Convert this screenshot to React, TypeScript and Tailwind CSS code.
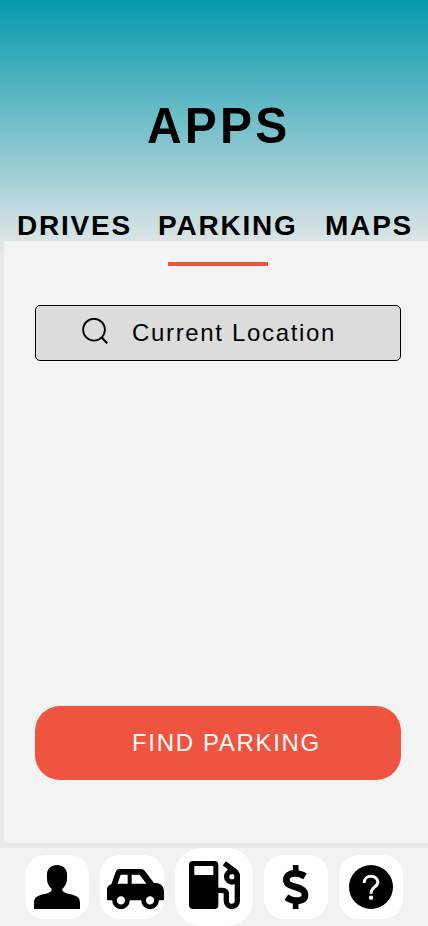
import type { ReactNode } from "react";

const tabs = [
  { label: "DRIVES", style: "w-[141px]" },
  { label: "PARKING", style: "w-[167px]" },
  { label: "MAPS", style: "" },
];

function Tile({ label, children }: { label: string; children: ReactNode }) {
  return (
    <button aria-label={label} className="size-16 shrink-0 overflow-hidden rounded-[20px] bg-white">
      <svg viewBox="0 0 192 192" className="block size-16">{children}</svg>
    </button>
  );
}

function BottomBar() {
  return (
    <nav className="flex h-[78px] items-center bg-[#f2f2f2] pl-[25px]">
      <Tile label="Profile">
        <path d="M96 30C114 30 126 42 126 58V70C126 86 119 96 112 101C110 111 122 114 138 118C158 124 165 128 165 145V162H27V145C27 128 34 124 54 118C70 114 82 111 80 101C73 96 66 86 66 70V58C66 42 78 30 96 30Z" />
      </Tile>
      <div className="ml-[11px] flex">
        <Tile label="Car">
          <path fillRule="evenodd" d="M58 42H124Q130 42 134 47L162 84H168C182 84 192 96 192 110V136H21V104Q21 92 34 88L46 53Q50 42 58 42ZM62 59L53 86H83V59ZM95 59V86H139L119 59Z" />
          <circle cx="63" cy="136" r="19.5" fill="white" stroke="black" strokeWidth="14" />
          <circle cx="150" cy="136" r="19.5" fill="white" stroke="black" strokeWidth="14" />
        </Tile>
      </div>
      <button aria-label="Fuel and parking" className="ml-[11px] size-[78px] shrink-0 rounded-[26px] bg-white">
        <svg viewBox="0 0 234 234" className="block size-[78px]">
          <path fillRule="evenodd" d="M54 39H118Q130 39 130 51V171Q130 183 118 183H54Q42 183 42 171V51Q42 39 54 39ZM58 54V81H115V54Z" />
          <g fill="none" stroke="black" strokeWidth="16">
            <path d="M129 127H142Q154 127 154 139V159A16.5 16.5 0 0 0 187 159V86Q187 76 179 69L148 46M168 62L162 76" />
            <circle cx="171" cy="86" r="16" />
          </g>
        </svg>
      </button>
      <div className="ml-[11px] flex gap-[11px]">
        <Tile label="Payments">
          <g fill="none" stroke="black" strokeWidth="20">
            <path d="M123 64C112 57 103 55 93 55C76 55 67 63 67 74C67 88 78 92 95 96C114 101 123 107 123 119C123 132 112 137 97 137C84 137 76 133 67 127" />
            <path d="M95 30V50M95 142V162" strokeWidth="17" />
          </g>
        </Tile>
        <Tile label="Help">
          <circle cx="96" cy="96" r="66" />
          <path d="M75.5 84C75.5 72 84 64 96 64C108 64 116.5 72 116.5 81C116.5 97 96 95 96 116" fill="none" stroke="white" strokeWidth="9" />
          <circle cx="96" cy="128" r="6.5" fill="white" />
        </Tile>
      </div>
    </nav>
  );
}

export default function App() {
  return (
    <div className="flex h-[926px] w-[428px] flex-col overflow-hidden bg-[#e8e8e8] bg-[linear-gradient(180deg,#0599ae_0px,#e8e8e8_255px)] font-['Liberation_Sans',Arial,sans-serif] text-black">
      <header className="flex h-[241px] flex-col">
        <h1 className="mt-[99px] origin-[50%_80%] scale-y-[1.04] pl-[147px] text-[48px] leading-[56px] font-bold tracking-[3.2px]">APPS</h1>
        <nav className="mt-[55px] flex pl-[17px] text-[28px] leading-8 font-bold tracking-[1.8px]">
          {tabs.map((t) => (
            <a key={t.label} className={t.style}>{t.label}</a>
          ))}
        </nav>
      </header>
      <main className="ml-1 flex h-[602px] flex-col bg-[#f3f3f3] pl-[31px]">
        <div className="mt-[21px] ml-[133px] h-1 w-[100px] bg-[#ef5440]" />
        <div className="mt-[39px] flex h-14 w-[366px] items-center rounded-[5px] border border-black bg-[#dcdcdc] pl-[46px]">
          <svg viewBox="0 0 26 27" className="mb-[3px] h-[27px] w-[26px]" fill="none" stroke="black" strokeWidth="1.8">
            <circle cx="12" cy="11.7" r="10.9" />
            <path d="M19.5 19.2L25.2 25.2" strokeWidth="2.1" />
          </svg>
          <span className="ml-[24px] text-2xl tracking-[1.66px]">Current Location</span>
        </div>
        <button className="mt-[345px] flex h-[74px] w-[366px] items-center rounded-[25px] bg-[#ef5440] pl-[97px] text-2xl tracking-[1.66px] text-white">
          FIND PARKING
        </button>
      </main>
      <div className="h-[5px]" />
      <BottomBar />
    </div>
  );
}
